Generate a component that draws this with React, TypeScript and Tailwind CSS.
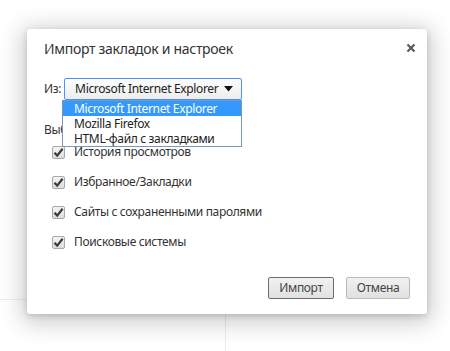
import React from 'react';

const items = [
  'История просмотров',
  'Избранное/Закладки',
  'Сайты с сохраненными паролями',
  'Поисковые системы',
];

const sources = ['Microsoft Internet Explorer', 'Mozilla Firefox', 'HTML-файл с закладками'];

function Check() {
  return (
    <span className="flex h-[13px] w-[13px] shrink-0 items-center justify-center rounded-[2px] border border-[#a9a9a9] bg-gradient-to-b from-[#f4f4f4] to-[#dcdcdc]">
      <svg width="11" height="11" viewBox="0 0 11 11">
        <path d="M1.5 5.8 L4.2 8.6 L9.6 1.8" fill="none" stroke="#3a3a3a" strokeWidth="2.2" />
      </svg>
    </span>
  );
}

export default function App() {
  return (
    <div
      className="relative h-[351px] w-[450px] overflow-hidden bg-white text-[#333]"
      style={{ fontFamily: '"Noto Sans", "Open Sans", sans-serif' }}
    >
      {/* faint page lines behind the overlay */}
      <div className="absolute left-0 top-[299px] h-px w-[30px] bg-[#ececec]" />
      <div className="absolute left-[225px] top-[310px] h-[41px] w-px bg-[#ececec]" />

      <div className="relative ml-[27px] mt-[29px] flex h-[285px] w-[400px] flex-col rounded-[3px] bg-white tracking-[-0.35px] shadow-[0_4px_23px_5px_rgba(0,0,0,0.2),0_2px_6px_rgba(0,0,0,0.15)]">
        <div className="flex items-start justify-between pl-[17px] pr-[11px] pt-[10px]">
          <h1 className="text-[14px] leading-[20px] tracking-[-0.3px] text-[#333]">Импорт закладок и настроек</h1>
          <svg width="10" height="10" viewBox="0 0 10 10" className="mt-[4px]">
            <path d="M1.5 1.5 L8.5 8.5 M8.5 1.5 L1.5 8.5" stroke="#555" strokeWidth="2" />
          </svg>
        </div>

        <div className="relative mt-[19px] flex items-center pl-[17px] text-[12px]">
          <span className="mr-[3px]">Из:</span>
          <div className="flex h-[22px] w-[178px] items-center justify-between whitespace-nowrap rounded-[2px] border border-[#4d90fe] bg-gradient-to-b from-[#fdfdfd] to-[#ededed] pl-[10px] pr-[8px]">
            <span className="text-[#222]">{sources[0]}</span>
            <svg width="9" height="6" viewBox="0 0 9 6">
              <path d="M0 0 H9 L4.5 5.5 Z" fill="#111" />
            </svg>
          </div>

          <div className="absolute left-[35px] top-[22px] z-10 flex w-[180px] flex-col whitespace-nowrap border border-[#7a96b8] bg-white">
            {sources.map((s, i) => (
              <span
                key={s}
                className={
                  'h-[15px] pl-[11px] leading-[15px] ' + (i === 0 ? 'bg-[#3399ff] text-white' : 'text-[#222]')
                }
              >
                {s}
              </span>
            ))}
          </div>
        </div>

        <div className="mt-[22px] pl-[17px] text-[12px] leading-[16px]">Выберите элементы для импорта:</div>

        <div className="mt-[6px] flex flex-col gap-[14px] pl-[25px] text-[12px]">
          {items.map((t) => (
            <label key={t} className="flex h-[16px] items-center gap-[9px]">
              <Check />
              <span>{t}</span>
            </label>
          ))}
        </div>

        <div className="mt-auto flex justify-end gap-[12px] pb-[15px] pr-[17px]">
          <button className="h-[22px] w-[66px] rounded-[2px] border border-[#6d6d6d] bg-gradient-to-b from-[#f1f1f1] to-[#e1e1e1] text-[12px] text-[#444]">
            Импорт
          </button>
          <button className="h-[22px] w-[64px] rounded-[2px] border border-[#b9b9b9] bg-gradient-to-b from-[#f1f1f1] to-[#e1e1e1] text-[12px] text-[#444]">
            Отмена
          </button>
        </div>
      </div>
    </div>
  );
}
